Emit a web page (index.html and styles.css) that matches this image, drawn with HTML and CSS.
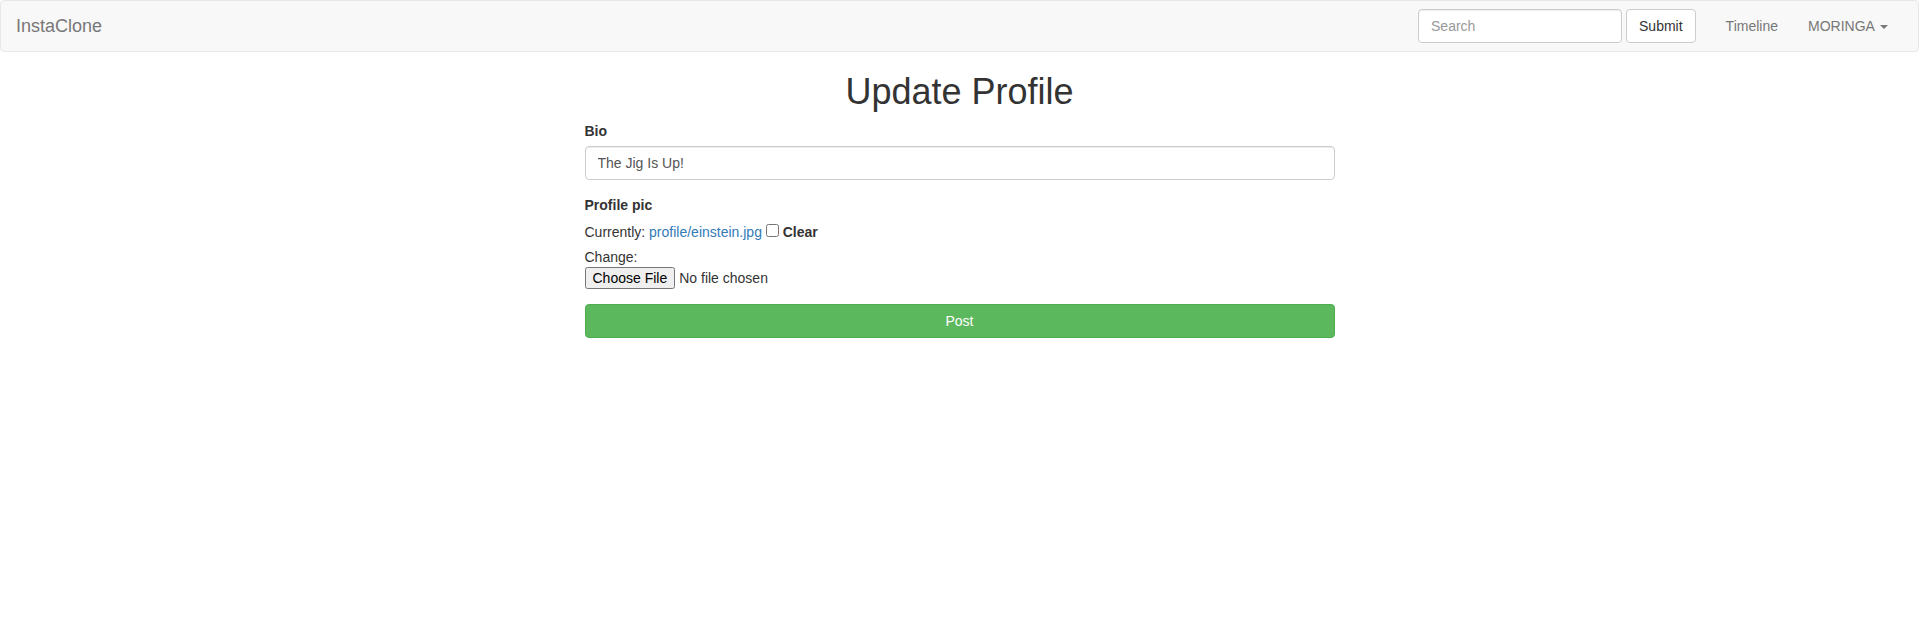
FILE: index.html
```html
<!DOCTYPE html>
<html lang="en">
<head>
<meta charset="utf-8">
<title>InstaClone</title>
<link rel="stylesheet" href="styles.css">
</head>
<body>
<nav class="navbar">
  <a class="navbar-brand" href="#">InstaClone</a>
  <div class="navbar-right-group">
    <form class="navbar-form">
      <input class="form-control search-input" type="text" placeholder="Search">
      <button class="btn btn-default" type="button">Submit</button>
    </form>
    <ul class="nav-links">
      <li><a href="#">Timeline</a></li>
      <li><a href="#">MORINGA <span class="caret"></span></a></li>
    </ul>
  </div>
</nav>
<div class="container">
  <h1 class="page-title">Update Profile</h1>
  <form class="profile-form">
    <div class="form-group">
      <label class="control-label">Bio</label>
      <input class="form-control" type="text" value="The Jig Is Up!">
    </div>
    <div class="form-group">
      <label class="control-label">Profile pic</label>
      <div class="file-widget">
        Currently: <a href="#">profile/einstein.jpg</a> <input type="checkbox" class="clear-check"> <label class="control-label">Clear</label><br>Change:<br><input type="file" class="file-input">
      </div>
    </div>
    <button class="btn btn-success btn-block" type="button">Post</button>
  </form>
</div>
</body>
</html>
```
FILE: styles.css
```css
* { box-sizing: border-box; }
html, body { margin: 0; padding: 0; }
body {
  font-family: "Liberation Sans", Arial, sans-serif;
  font-size: 14px;
  line-height: 1.42857143;
  color: #333;
  background: #fff;
}
a { color: #337ab7; text-decoration: none; }

.navbar {
  display: flex;
  align-items: flex-start;
  justify-content: space-between;
  min-height: 52px;
  margin-bottom: 20px;
  background-color: #f8f8f8;
  border: 1px solid #e7e7e7;
  border-radius: 4px;
}
.navbar-brand {
  display: block;
  height: 50px;
  padding: 15px;
  font-size: 18px;
  line-height: 20px;
  color: #777;
}
.navbar-right-group {
  display: flex;
  align-items: flex-start;
  padding-right: 15px;
}
.navbar-form {
  display: flex;
  align-items: center;
  gap: 4px;
  margin: 8px 0;
  padding: 0 15px;
}
.form-control {
  display: block;
  width: 100%;
  height: 34px;
  padding: 6px 12px;
  font-family: inherit;
  font-size: 14px;
  line-height: 1.42857143;
  color: #555;
  background-color: #fff;
  border: 1px solid #ccc;
  border-radius: 4px;
  box-shadow: inset 0 1px 1px rgba(0,0,0,.075);
  margin: 0;
}
.form-control::placeholder { color: #999; }
.search-input { width: 204px; }
.btn {
  display: inline-block;
  margin: 0;
  padding: 6px 12px;
  font-family: inherit;
  font-size: 14px;
  line-height: 1.42857143;
  text-align: center;
  white-space: nowrap;
  border: 1px solid transparent;
  border-radius: 4px;
  cursor: pointer;
}
.btn-default { color: #333; background-color: #fff; border-color: #ccc; }
.btn-success { color: #fff; background-color: #5cb85c; border-color: #4cae4c; }
.btn-block { display: block; width: 100%; }

.nav-links {
  display: flex;
  list-style: none;
  margin: 0;
  padding: 0;
}
.nav-links a {
  display: block;
  padding: 15px;
  line-height: 20px;
  color: #777;
}
.caret {
  display: inline-block;
  width: 0;
  height: 0;
  margin-left: 2px;
  vertical-align: middle;
  border-top: 4px dashed;
  border-right: 4px solid transparent;
  border-left: 4px solid transparent;
}

.container {
  width: 750px;
  margin: 0 auto;
}
.page-title {
  margin: 20px 0 9px;
  font-size: 36px;
  font-weight: 500;
  line-height: 1.1;
  text-align: center;
  font-family: inherit;
}
.form-group { margin-bottom: 15px; }
.control-label {
  display: inline-block;
  max-width: 100%;
  margin-bottom: 5px;
  font-weight: bold;
}
.clear-check {
  margin: 4px 0 0;
  line-height: normal;
}
.file-input {
  font-family: inherit;
  font-size: 14px;
  line-height: inherit;
}
```
